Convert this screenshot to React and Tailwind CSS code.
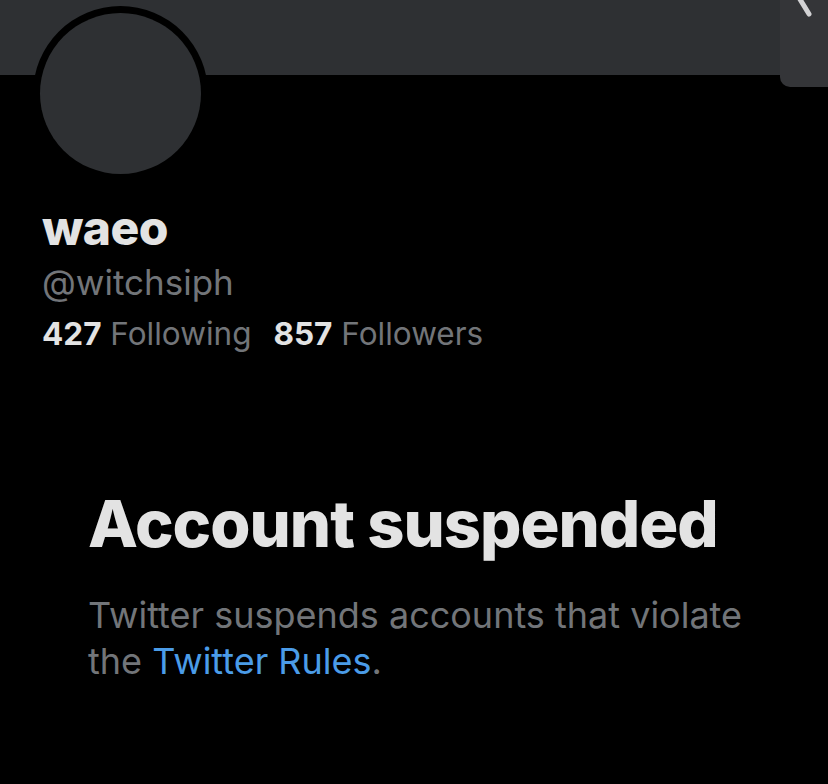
import React from "react";

export default function App() {
  return (
    <div
      className="w-[828px] h-[784px] bg-black overflow-hidden"
      style={{ fontFamily: "Inter, 'Liberation Sans', sans-serif" }}
    >
      <div className="relative h-[75px] bg-[#2e3033]">
        <div className="absolute right-0 top-0 w-[48px] h-[87px] bg-[#343538] rounded-bl-[10px]">
          <svg width="48" height="30" className="absolute left-0 top-0">
            <line x1="18" y1="-4" x2="29" y2="14" stroke="#d2d2d4" strokeWidth="5" strokeLinecap="round" />
          </svg>
        </div>
      </div>
      <div className="px-[42px]">
        <div className="relative -mt-[69px] -ml-[9px] w-[175px] h-[175px] rounded-full bg-black p-[7px]">
          <div className="w-full h-full rounded-full bg-[#2e3033]" />
        </div>
        <div className="mt-[21px] text-[48px] leading-[52px] font-extrabold text-[#e3e3e3] tracking-[-0.5px]">
          waeo
        </div>
        <div className="mt-[6px] text-[35px] leading-[44px] text-[#727579]">@witchsiph</div>
        <div className="mt-[10px] text-[31.5px] leading-[40px] text-[#727579] flex gap-[22px]">
          <span>
            <span className="font-bold text-[#e3e3e3]">427</span> Following
          </span>
          <span>
            <span className="font-bold text-[#e3e3e3]">857</span> Followers
          </span>
        </div>
      </div>
      <div className="pl-[88px] pr-[20px] mt-[134px]">
        <div className="text-[65px] leading-[72px] font-extrabold text-[#e3e3e3] tracking-[-1px]">
          Account suspended
        </div>
        <div className="mt-[32px] text-[36px] leading-[46px] text-[#727579] whitespace-nowrap">
          Twitter suspends accounts that violate
          <br />
          the <span className="text-[#4b9ce8]">Twitter Rules</span>.
        </div>
      </div>
    </div>
  );
}
